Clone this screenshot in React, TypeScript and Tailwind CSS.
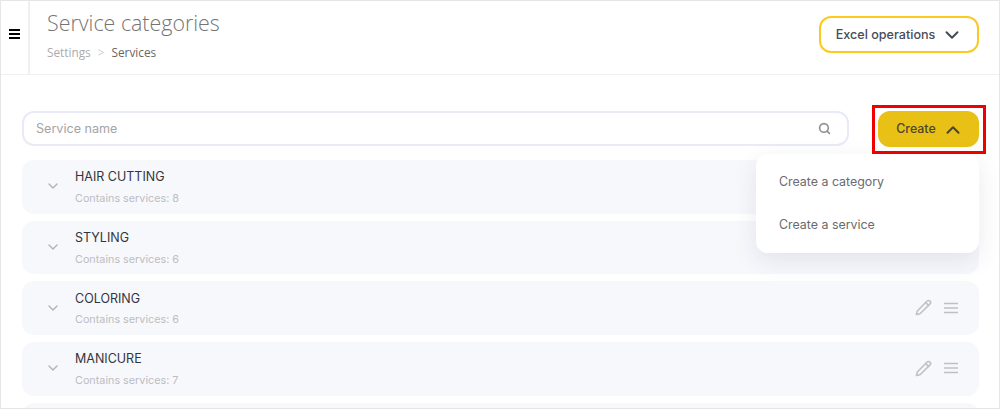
import { ChevronDown, ChevronUp, Pencil, Search } from "lucide-react";

const categories = [
  { name: "HAIR CUTTING", count: 8 },
  { name: "STYLING", count: 6 },
  { name: "COLORING", count: 6 },
  { name: "MANICURE", count: 7 },
];

function Bars({ className }: { className: string }) {
  return (
    <svg viewBox="0 0 14 12" className={className} fill="none" stroke="currentColor" strokeWidth="1.6">
      <path d="M0 1.5h14M0 6h14M0 10.5h14" />
    </svg>
  );
}

export default function App() {
  return (
    <div className="h-[409px] w-[1000px] overflow-hidden border border-[#e6e6e6] bg-white font-['Inter',sans-serif]">
      <header className="flex h-[74px] border-b border-[#f0f0f0]">
        <div className="flex w-[29px] items-center justify-center border-r-2 border-[#f0f0f0] pb-[8px]">
          <svg viewBox="0 0 11 10" className="h-[10px] w-[11px] text-black" fill="none" stroke="currentColor" strokeWidth="2">
            <path d="M0 1h11M0 5h11M0 9h11" />
          </svg>
        </div>
        <div className="flex-1 pl-[17px] pt-[7px] font-['Open_Sans',sans-serif]">
          <h1 className="text-[21.4px] leading-[30px] font-light text-[#747474]">Service categories</h1>
          <div className="mt-[6px] flex items-center text-[11.8px] leading-[16px]">
            <span className="text-[#ababab]">Settings</span>
            <span className="mx-[7px] text-[#cfcfcf]">&gt;</span>
            <span className="text-[#666666]">Services</span>
          </div>
        </div>
        <div className="pr-[20px] pt-[15px]">
          <button className="flex h-[37px] w-[160px] items-center justify-center gap-[6px] rounded-[12px] border-2 border-[#fdc921] bg-white pl-[1px] pt-[1px] text-[12.6px] font-medium text-[#474c59]">
            Excel operations
            <ChevronDown className="h-[22px] w-[22px]" strokeWidth={2.2} />
          </button>
        </div>
      </header>

      <main className="relative pl-[21px] pr-[20px] pt-[36px]">
        <div className="flex gap-[29px]">
          <div className="flex h-[35px] flex-1 items-center justify-between rounded-[12px] border-2 border-[#e8ebf7] pl-[12px] pr-[16px]">
            <span className="pt-[1px] text-[12.6px] font-normal text-[#a4a4a4]">Service name</span>
            <Search className="h-[13px] w-[13px] text-[#8f8f8f]" strokeWidth={3} />
          </div>
          <button className="flex h-[36px] w-[101px] items-center justify-center gap-[6px] rounded-[12px] bg-[#e9c015] pl-[3px] pt-[1px] text-[12.4px] font-medium text-[#4a4530]">
            Create
            <ChevronUp className="h-[22px] w-[22px]" strokeWidth={2.2} />
          </button>
        </div>

        <div className="mt-[13px] flex flex-col gap-[7px]">
          {categories.map((c, i) => (
            <div key={c.name} className="flex h-[53.7px] shrink-0 items-center rounded-[12px] bg-[#f7f8fc] pb-[1px] pl-[23px] pr-[21px]">
              <ChevronDown className="h-[16px] w-[16px] text-[#b0b0b8]" strokeWidth={2} />
              <div className="ml-[14px] flex-1 pt-[1.5px]">
                <div className="text-[12.5px] leading-[18px] font-normal text-[#33353e]">{c.name}</div>
                <div className="mt-[4.5px] text-[10.8px] leading-[15px] font-normal text-[#bdbdc2]">Contains services: {c.count}</div>
              </div>
              {i > 1 && (
                <div className="flex items-center gap-[12px] text-[#c0c0c0]">
                  <Pencil className="h-[17px] w-[17px]" strokeWidth={2.2} />
                  <Bars className="h-[12px] w-[14px]" />
                </div>
              )}
            </div>
          ))}
          {/* next row only peeks in at the bottom of the window */}
          <div className="h-[53.7px] shrink-0 rounded-[12px] bg-[#f7f8fc]" />
        </div>

        {/* highlight round the button */}
        <div className="absolute right-[13px] top-[30px] h-[49px] w-[114px] border-[3px] border-[#f00000]" />

        <div className="absolute right-[20px] top-[79px] w-[223px] rounded-[12px] bg-white pb-[6px] pt-[7px] shadow-[0_8px_24px_rgba(40,50,90,0.1)]">
          <div className="flex h-[43px] items-center pl-[23px] text-[12.4px] text-[#6a6a6e]">Create a category</div>
          <div className="flex h-[43px] items-center pl-[23px] text-[12.4px] text-[#6a6a6e]">Create a service</div>
        </div>
      </main>
    </div>
  );
}
